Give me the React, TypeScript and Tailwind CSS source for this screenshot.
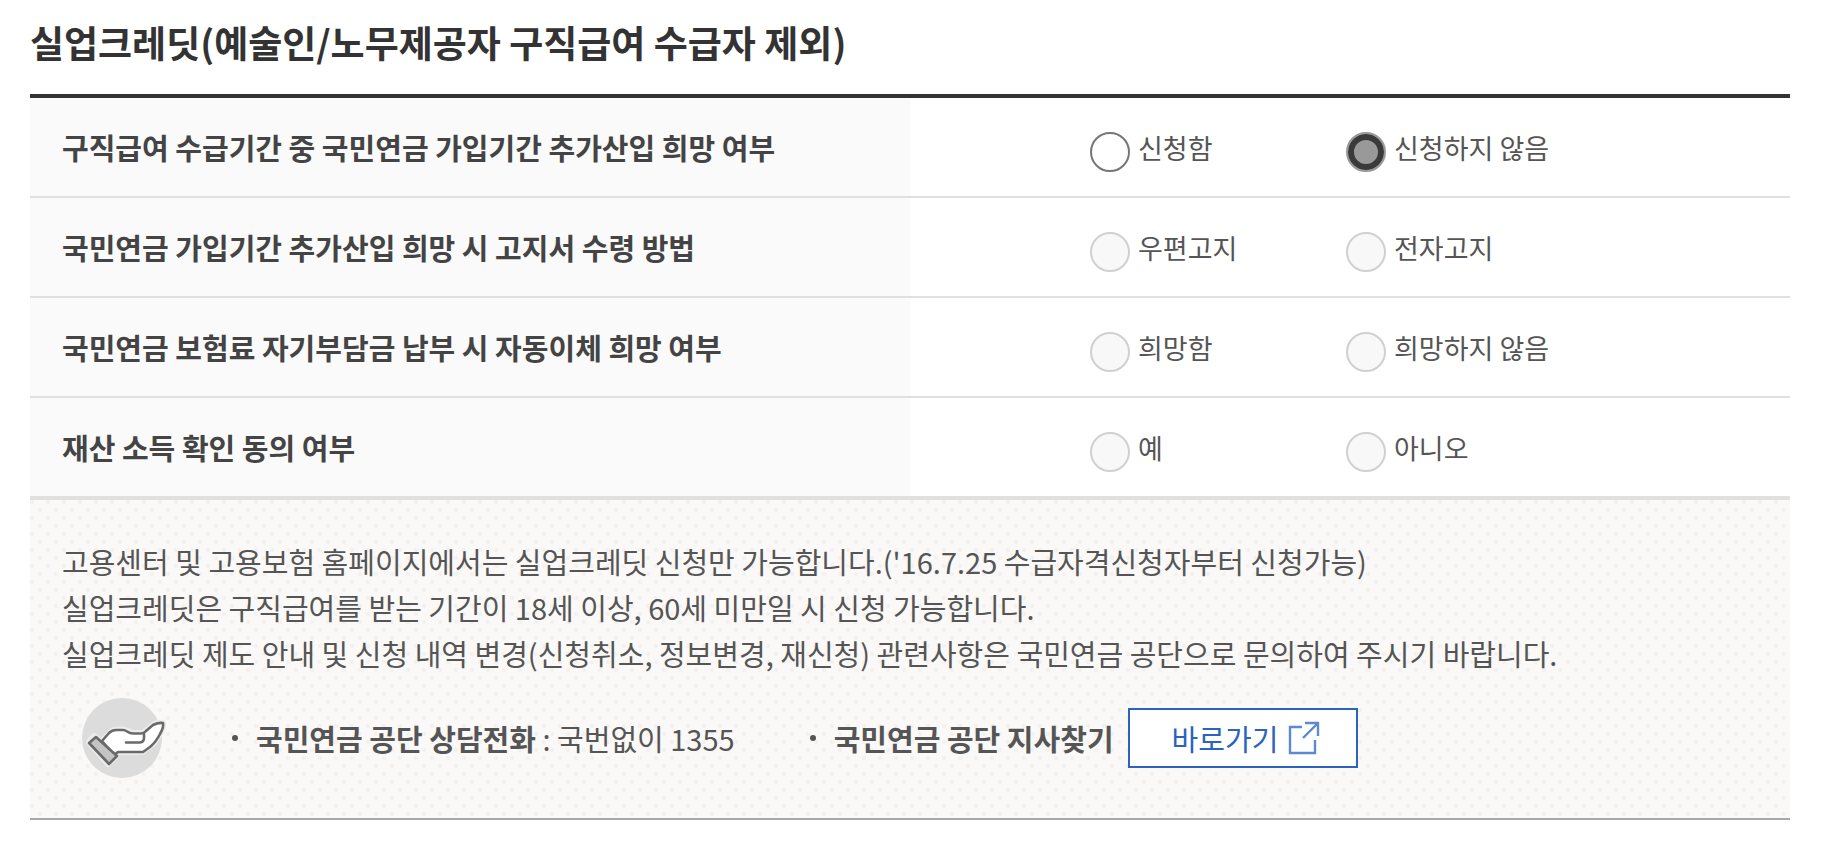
type Option = { label: string; checked?: boolean };
type Row = { name: string; title: string; disabled: boolean; options: Option[] };

const rows: Row[] = [
  {
    name: "extend",
    title: "구직급여 수급기간 중 국민연금 가입기간 추가산입 희망 여부",
    disabled: false,
    options: [{ label: "신청함" }, { label: "신청하지 않음", checked: true }],
  },
  {
    name: "notice",
    title: "국민연금 가입기간 추가산입 희망 시 고지서 수령 방법",
    disabled: true,
    options: [{ label: "우편고지" }, { label: "전자고지" }],
  },
  {
    name: "transfer",
    title: "국민연금 보험료 자기부담금 납부 시 자동이체 희망 여부",
    disabled: true,
    options: [{ label: "희망함" }, { label: "희망하지 않음" }],
  },
  {
    name: "consent",
    title: "재산 소득 확인 동의 여부",
    disabled: true,
    options: [{ label: "예" }, { label: "아니오" }],
  },
];

const notes = [
  "고용센터 및 고용보험 홈페이지에서는 실업크레딧 신청만 가능합니다.('16.7.25 수급자격신청자부터 신청가능)",
  "실업크레딧은 구직급여를 받는 기간이 18세 이상, 60세 미만일 시 신청 가능합니다.",
  "실업크레딧 제도 안내 및 신청 내역 변경(신청취소, 정보변경, 재신청) 관련사항은 국민연금 공단으로 문의하여 주시기 바랍니다.",
];

function RadioOption({ name, option, disabled }: { name: string; option: Option; disabled: boolean }) {
  return (
    <label className="flex items-center gap-2 whitespace-nowrap">
      <input
        type="radio"
        name={name}
        defaultChecked={option.checked}
        disabled={disabled}
        className="mt-2 size-10 shrink-0 appearance-none rounded-full border-2 border-[#767676] bg-white checked:border-[#999] checked:bg-[#999] checked:shadow-[inset_0_0_0_6px_#3a3a3a] disabled:border-[#d0d0d0] disabled:bg-[#f8f8f8]"
      />
      {option.label}
    </label>
  );
}

function HandIcon() {
  return (
    <svg viewBox="0 0 84 80" className="h-20 w-21 shrink-0" aria-hidden="true">
      <circle cx="40" cy="40" r="40" fill="#dcdcdc" />
      <g strokeLinejoin="round" strokeLinecap="round">
        <path
          d="M21 42 L30 33 Q32 31.500 36 31.500 H42 L50 35 H61 L73 26 Q77 24 81 25 Q82 28 79 34 L72 45 L60 54 H36 L32 57 Z M12 38 L7 44 L26 66 L34 58 Z"
          fill="none"
          stroke="#ececec"
          strokeWidth="6"
        />
        <path
          d="M20 43 L27 35 Q30 32 34 32 H41 Q43 32 45 33.500 Q48 35.500 51 35.500 H59 Q62 35.500 64 33 L71 27 Q76 24.500 81 25 Q82 29 78 36 Q74 44 68 49 L61 54 H36 L32 57 Z"
          fill="#fff"
          stroke="#6a6a6a"
          strokeWidth="2.600"
        />
        <path d="M44 44.500 H58 Q62 44 62 40 V36" fill="none" stroke="#6a6a6a" strokeWidth="2.600" />
        <path d="M14 39 L7 45 L27 66 L35 58 Z" fill="#c4c4c4" stroke="#6a6a6a" strokeWidth="2.600" />
      </g>
    </svg>
  );
}

function ExternalIcon() {
  return (
    <svg viewBox="0 0 32 34" className="h-[34px] w-8 shrink-0" fill="none" stroke="#5b8ad3" strokeWidth="2.400" aria-hidden="true">
      <path d="M14 6 H2 V32 H27 V19" />
      <path d="M17 2 H30 V15 M30 2 L15 17" />
    </svg>
  );
}

function Bullet() {
  return <span className="mr-[18px] size-1.5 shrink-0 rounded-full bg-[#555]" />;
}

export default function App() {
  return (
    <main className="pr-[38px] pl-[30px] pt-3.5 pb-10 font-['Noto_Sans_CJK_KR','Noto_Sans',sans-serif] text-[#555]">
      <h1 className="mb-6 text-[37px] leading-14 font-bold text-[#333]">
        실업크레딧(예술인/노무제공자 구직급여 수급자 제외)
      </h1>
      <table className="w-full table-fixed border-separate border-spacing-0 border-t-4 border-[#333]">
        <tbody>
          {rows.map((row, i) => {
            const line = i < rows.length - 1 ? "border-b-2 h-[100px]" : "h-[98px]";
            return (
              <tr key={row.name}>
                <th scope="row" className={`${line} w-1/2 border-[#e0e0e0] bg-[#fafafa] p-0 pl-8 text-left text-[29px] leading-10 font-bold text-[#444]`}>
                  {row.title}
                </th>
                <td className={`${line} border-[#e0e0e0] p-0 pt-0.5 pl-[180px] text-[27px] leading-10`}>
                  <div className="grid grid-cols-[256px_1fr]">
                    {row.options.map((o) => (
                      <RadioOption key={o.label} name={row.name} option={o} disabled={row.disabled} />
                    ))}
                  </div>
                </td>
              </tr>
            );
          })}
        </tbody>
      </table>
      <section className="border-t-4 border-b-2 border-t-[#e0e0e0] border-b-[#a8a8a8] bg-[#faf9f7] bg-[radial-gradient(circle_at_2px_2px,#f3f2f1_2px,transparent_2.5px),radial-gradient(circle_at_10px_10px,#f3f2f1_2px,transparent_2.5px)] bg-size-[16px_16px] px-8 pt-[38px] pb-10">
        <div className="text-[29px] leading-[46px]">
          {notes.map((n) => (
            <p key={n}>{n}</p>
          ))}
        </div>
        <div className="mt-[22px] flex items-center pl-5 text-[29px] leading-10 whitespace-nowrap">
          <HandIcon />
          <ul className="ml-[66px] flex items-center gap-[75px]">
            <li className="flex items-center">
              <Bullet />
              <span>
                <strong>국민연금 공단 상담전화</strong> : 국번없이 1355
              </span>
            </li>
            <li className="flex items-center">
              <Bullet />
              <strong>국민연금 공단 지사찾기</strong>
              <a href="#branches" className="ml-3.5 flex h-15 w-[230px] items-center gap-2.5 border-2 border-[#2a63c0] bg-white pl-[42px] text-[#2a63c0]">
                바로가기
                <ExternalIcon />
              </a>
            </li>
          </ul>
        </div>
      </section>
    </main>
  );
}
